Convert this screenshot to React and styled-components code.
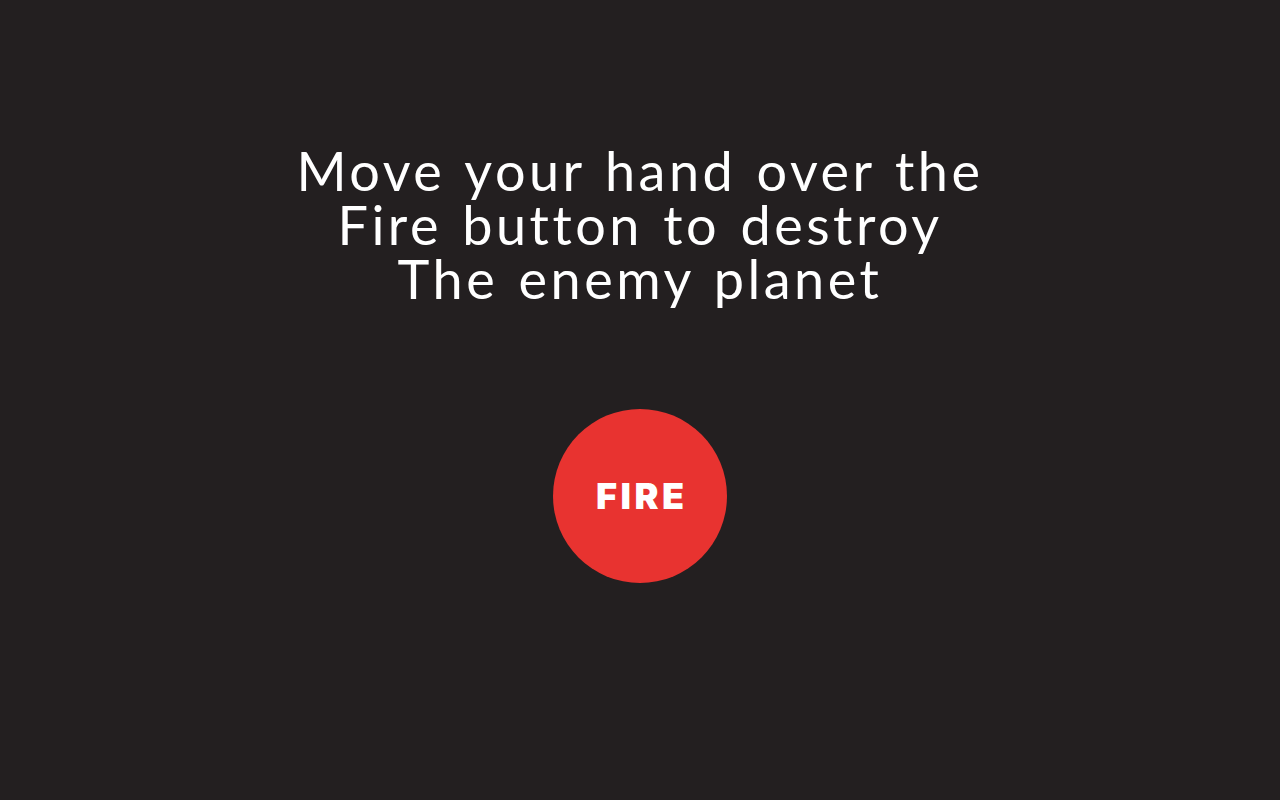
import React from "react";
import styled, { createGlobalStyle } from "styled-components";

const Global = createGlobalStyle`
  html, body { margin: 0; padding: 0; background: #231f20; }
  body { width: 1280px; height: 800px; overflow: hidden; }
`;

const Screen = styled.main`
  width: 1280px;
  height: 800px;
  background: #231f20;
  display: flex;
  flex-direction: column;
  align-items: center;
  box-sizing: border-box;
  padding-top: 144px;
`;

const Message = styled.h1`
  margin: 0;
  color: #ffffff;
  font-family: "Lato", "Noto Sans", sans-serif;
  font-weight: 400;
  font-size: 54px;
  line-height: 54px;
  text-align: center;
  letter-spacing: 3.5px;
  word-spacing: 3px;
`;

const FireButton = styled.button`
  margin-top: 103px;
  width: 174px;
  height: 174px;
  border-radius: 50%;
  border: none;
  background: #e83330;
  color: #ffffff;
  font-family: "Inter", "Liberation Sans", Arial, sans-serif;
  font-weight: 900;
  font-size: 36px;
  letter-spacing: 3.5px;
  display: flex;
  align-items: center;
  justify-content: center;
  padding: 0 0 0 3.5px;
  cursor: pointer;
`;

export default function App() {
  return (
    <>
      <Global />
      <Screen>
        <Message>
          Move your hand over the
          <br />
          Fire button to destroy
          <br />
          The enemy planet
        </Message>
        <FireButton>FIRE</FireButton>
      </Screen>
    </>
  );
}
